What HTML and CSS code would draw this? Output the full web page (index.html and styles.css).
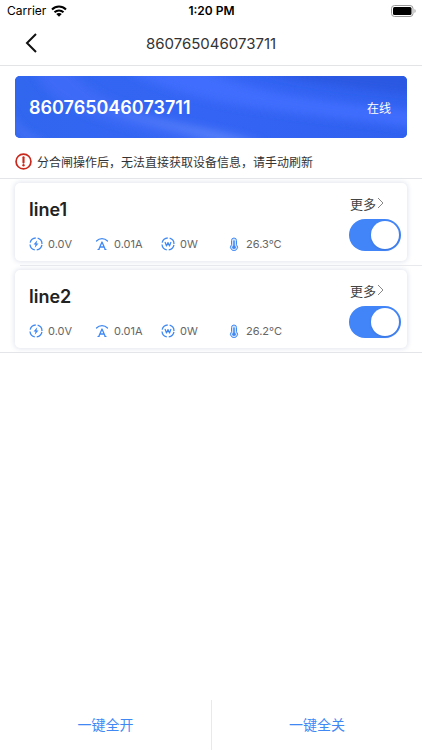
FILE: index.html
```html
<!DOCTYPE html>
<html lang="zh-CN">
<head>
    <meta charset="UTF-8">
    <meta name="viewport" content="width=device-width, initial-scale=1">
    <title>860765046073711</title>
    <link rel="stylesheet" href="styles.css">
</head>
<body>
    <!-- icons -->
    <svg class="sprite" aria-hidden="true">
        <symbol id="icon-volt" viewBox="0 0 28 28">
            <circle cx="14" cy="14" r="12" fill="none" stroke="currentColor" stroke-width="2.6" stroke-dasharray="14.85 4" stroke-dashoffset="-2"/>
            <path d="M16.5 6.5 9 15h4l-1.500 6.500L19 13h-4z" fill="currentColor"/>
        </symbol>
        <symbol id="icon-amp" viewBox="0 0 28 28">
            <path d="M3 8C9 1.500 19 1.500 25 8" fill="none" stroke="currentColor" stroke-width="2.400" stroke-linecap="round"/>
            <path d="M7.500 25 14 10l6.500 15M10 20h8" fill="none" stroke="currentColor" stroke-width="2.600" stroke-linejoin="round"/>
            <path d="M5 25h4M19 25h4" stroke="currentColor" stroke-width="2"/>
        </symbol>
        <symbol id="icon-watt" viewBox="0 0 28 28">
            <circle cx="14" cy="14" r="12" fill="none" stroke="currentColor" stroke-width="2.6" stroke-dasharray="14.85 4" stroke-dashoffset="-2"/>
            <path d="m8 10 3 8 3-7 3 7 3-8" fill="none" stroke="currentColor" stroke-width="2.400" stroke-linejoin="round"/>
        </symbol>
        <symbol id="icon-temp" viewBox="0 0 28 28">
            <path d="M9 15.500V7a5 5 0 0 1 10 0v8.500a7 7 0 1 1-10 0z" fill="#d3e4ff" stroke="currentColor" stroke-width="2"/>
            <path d="M14 8v12" stroke="currentColor" stroke-width="3" stroke-linecap="round"/>
            <circle cx="14" cy="20.500" r="3.600" fill="currentColor"/>
        </symbol>
    </svg>

    <div class="status-bar">
        <div class="carrier">
            Carrier
            <svg class="wifi" viewBox="0 0 32 24" aria-hidden="true">
                <path d="M2 9C10 1 22 1 30 9M7 14.500c5-5 13-5 18 0" fill="none" stroke="#000" stroke-width="4"/>
                <path d="M10.500 18c3-3 8-3 11 0L16 23.500z"/>
            </svg>
        </div>
        <div class="time">1:20 PM</div>
        <svg class="battery" viewBox="0 0 50 24" aria-hidden="true">
            <rect x="1" y="1" width="43" height="22" rx="6" fill="#fff" stroke="#999" stroke-width="2"/>
            <rect x="4" y="4" width="37" height="16" rx="3"/>
            <path d="M47 8c3 1 3 7 0 8z" fill="#999"/>
        </svg>
    </div>

    <header class="nav-bar">
        <button class="back" type="button" aria-label="返回">
            <svg viewBox="0 0 12 20" aria-hidden="true"><path d="M11 1 2 10l9 9" fill="none" stroke="#111" stroke-width="2"/></svg>
        </button>
        <h1>860765046073711</h1>
    </header>

    <main>
        <section class="banner">
            <svg class="banner-bg" viewBox="0 0 392 62" preserveAspectRatio="none" aria-hidden="true">
                <defs>
                    <filter id="soft" x="-20%" y="-50%" width="140%" height="200%"><feGaussianBlur stdDeviation="4"/></filter>
                    <linearGradient id="blue"><stop offset="0" stop-color="#3166ef"/><stop offset="0.500" stop-color="#3464f4"/><stop offset="1" stop-color="#2f60ee"/></linearGradient>
                </defs>
                <rect width="392" height="62" fill="url(#blue)"/>
                <g filter="url(#soft)">
                    <path d="M20-6C34 34 100 50 200 70h40C180 44 90 40 56-6z" fill="#3d6af7"/>
                    <path d="M110-6c70 38 180 44 290 58V34C320 26 240 18 190-6z" fill="#3f6dfd"/>
                    <path d="M80 28c50 18 110 20 170 40h-40C160 50 110 44 80 28z" fill="#5680f9"/>
                    <path d="M240-8c50 18 110 20 160 26V-8z" fill="#2a59e2"/>
                    <path d="M-6 32c8 20 20 26 40 36H18C6 60-4 54-6 32z" fill="#4672f5"/>
                </g>
            </svg>
            <strong class="device-id">860765046073711</strong>
            <span class="online">在线</span>
        </section>

        <p class="notice">
            <svg viewBox="0 0 32 32" aria-hidden="true">
                <circle cx="16" cy="16" r="14" fill="none" stroke="#c9281c" stroke-width="3.200"/>
                <path d="M16 8v10" stroke="#c9281c" stroke-width="4" stroke-linecap="round"/>
                <circle cx="16" cy="23" r="2.200" fill="#c9281c"/>
            </svg>
            分合闸操作后，无法直接获取设备信息，请手动刷新
        </p>

        <ul class="lines">
            <li>
                <article class="card">
                    <div class="info">
                        <h2>line1</h2>
                        <div class="metrics">
                            <span><svg><use href="#icon-volt"/></svg>0.0V</span>
                            <span><svg><use href="#icon-amp"/></svg>0.01A</span>
                            <span><svg><use href="#icon-watt"/></svg>0W</span>
                            <span><svg><use href="#icon-temp"/></svg>26.3°C</span>
                        </div>
                    </div>
                    <div class="actions">
                        <a class="more" href="#">更多<svg viewBox="0 0 7 12" aria-hidden="true"><path d="m1 1 5 5-5 5" fill="none" stroke="#888"/></svg></a>
                        <input class="switch" type="checkbox" aria-label="line1" checked>
                    </div>
                </article>
            </li>
            <li>
                <article class="card">
                    <div class="info">
                        <h2>line2</h2>
                        <div class="metrics">
                            <span><svg><use href="#icon-volt"/></svg>0.0V</span>
                            <span><svg><use href="#icon-amp"/></svg>0.01A</span>
                            <span><svg><use href="#icon-watt"/></svg>0W</span>
                            <span><svg><use href="#icon-temp"/></svg>26.2°C</span>
                        </div>
                    </div>
                    <div class="actions">
                        <a class="more" href="#">更多<svg viewBox="0 0 7 12" aria-hidden="true"><path d="m1 1 5 5-5 5" fill="none" stroke="#888"/></svg></a>
                        <input class="switch" type="checkbox" aria-label="line2" checked>
                    </div>
                </article>
            </li>
        </ul>
    </main>

    <footer class="bottom-bar">
        <button type="button">一键全开</button>
        <button type="button">一键全关</button>
    </footer>
</body>
</html>
```
FILE: styles.css
```css
* { box-sizing: border-box; }
body { margin: 0; min-height: 100vh; display: flex; flex-direction: column; background: #fff; color: #333; font-family: Inter, "Noto Sans CJK SC", sans-serif; }
h1, h2, p, ul { margin: 0; padding: 0; }
button { padding: 0; border: none; background: none; font-family: inherit; cursor: pointer; }
main { flex: 1; }
.sprite { position: absolute; width: 0; height: 0; }

.status-bar { display: grid; grid-template-columns: 1fr auto 1fr; align-items: center; height: 21px; padding: 0 6px 0 7px; color: #000; font-size: 12px; }
.carrier { display: flex; align-items: center; gap: 5px; }
.wifi { width: 16px; height: 12px; }
.time { font-weight: 600; }
.battery { width: 25px; height: 12px; justify-self: end; }

.nav-bar { display: grid; grid-template-columns: 62px 1fr 62px; align-items: center; height: 45px; border-bottom: 1px solid #e2e4e6; }
.nav-bar h1 { text-align: center; font-size: 15px; font-weight: 400; }
.back { display: flex; align-items: center; justify-content: center; height: 44px; }
.back svg { width: 12px; height: 20px; }

.banner { position: relative; display: flex; align-items: center; justify-content: space-between; height: 62px; margin: 10px 15px 0; padding: 0 16px 0 14px; border-radius: 5px; overflow: hidden; background: #3164f1; color: #fff; }
.banner-bg { position: absolute; inset: 0; width: 100%; height: 100%; }
.device-id { position: relative; font-size: 18px; font-weight: 600; }
.online { position: relative; font-size: 12px; }

.notice { display: flex; align-items: center; gap: 5px; height: 40px; padding: 6px 15px 0; font-size: 12px; }
.notice svg { flex: none; width: 17px; height: 17px; }

.lines { list-style: none; border-top: 1px solid #e4e5e9; border-bottom: 1px solid #e4e5e9; }
.lines li { padding: 4px 15px; }
.lines li + li { padding-top: 5px; background: linear-gradient(#e8e9ed, #e8e9ed) 20px 0 / 100% 1px no-repeat; }
.card { display: flex; justify-content: space-between; height: 78px; padding: 0 6px 0 14px; border-radius: 5px; background: #fff; box-shadow: 0 0 5px 1px #e2e5ee; }
.info { display: flex; flex-direction: column; justify-content: space-between; padding: 15px 0 9px; }
.card h2 { font-size: 18px; font-weight: 600; line-height: 24px; color: #222; }
.metrics { display: grid; grid-template-columns: repeat(4, 66px); font-size: 11px; line-height: 16px; color: #666; }
.metrics span { display: flex; align-items: center; gap: 5px; white-space: nowrap; }
.metrics svg { flex: none; width: 14px; height: 14px; color: #4089f5; }
.actions { display: flex; flex-direction: column; gap: 6px; padding-top: 10px; }
.more { display: flex; align-items: center; gap: 1px; height: 20px; padding-left: 1px; color: #444; font-size: 13px; text-decoration: none; }
.more svg { width: 7px; height: 12px; }
.switch { appearance: none; width: 52px; height: 32px; margin: 0; padding: 2px; border-radius: 16px; background: #ddd; cursor: pointer; }
.switch::before { content: ""; display: block; width: 28px; height: 28px; border-radius: 50%; background: #fff; box-shadow: 0 1px 2px #3a74dc; }
.switch:checked { background: #4285f8; }
.switch:checked::before { margin-left: auto; }

.bottom-bar { display: grid; grid-template-columns: 1fr 1fr; height: 50px; }
.bottom-bar button { padding-bottom: 2px; color: #4089f5; font-size: 14px; }
.bottom-bar button + button { border-left: 1px solid #e8e9eb; }
```
